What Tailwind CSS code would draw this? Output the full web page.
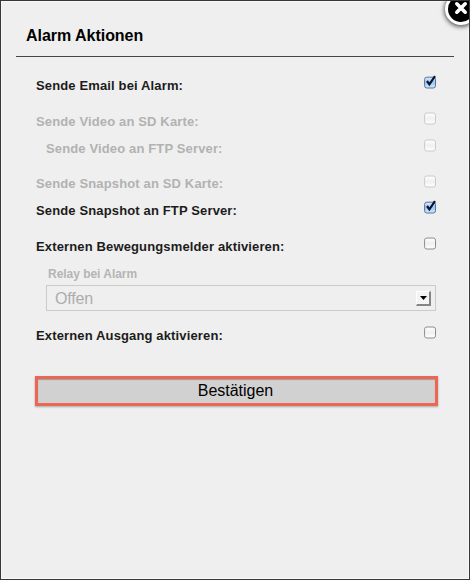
<!DOCTYPE html>
<html lang="de">
<head>
<meta charset="utf-8">
<title>Alarm Aktionen</title>
<script src="https://cdn.jsdelivr.net/npm/@tailwindcss/browser@4"></script>
</head>
<body class="font-['Liberation_Sans',Arial,sans-serif]">
<svg class="absolute size-0">
  <defs>
    <linearGradient id="off" x2="0" y2="1"><stop offset="0" stop-color="#fff"/><stop offset=".5" stop-color="#f0f0f0"/><stop offset="1" stop-color="#fff"/></linearGradient>
    <linearGradient id="on" x2="0" y2="1"><stop offset="0" stop-color="#dcecfa"/><stop offset=".5" stop-color="#9cc6ee"/><stop offset="1" stop-color="#d0edff"/></linearGradient>
    <symbol id="box" viewBox="0 0 14 15"><rect x=".6" y="2" width="10.9" height="11" rx="2.2" fill="url(#off)" stroke="currentColor"/></symbol>
    <symbol id="checked" viewBox="0 0 14 15"><rect x=".6" y="2.2" width="10.9" height="10.8" rx="2.2" fill="url(#on)" stroke="#58719a"/><path d="M3 6 5.4 9.4 11 1.2" fill="none" stroke="#0b1433" stroke-width="2.2"/></symbol>
  </defs>
</svg>
<main class="relative h-[580px] w-[470px] overflow-hidden border border-[#3a3637] bg-[#efefef] px-[15px] shadow-[inset_0_0_0_1px_#f8f8f8]">
  <button class="absolute -top-[8px] left-[444px] size-[32px] rounded-full border-[3px] border-white bg-black shadow-[0_1px_4px_1px_#00000099]" aria-label="Schließen">
    <svg class="absolute left-[6px] top-[5px] size-[14px]" viewBox="0 0 14 14"><path d="M2.8 2.8 11.2 11.2M11.2 2.8 2.8 11.2" stroke="#fff" stroke-width="3.6" stroke-linecap="round"/></svg>
  </button>
  <header class="h-[56px] border-b border-[#4a4647] pl-[10px] pt-[26px]">
    <h1 class="text-[16px] leading-[18px] font-bold text-black tracking-[-0.03px]">Alarm Aktionen</h1>
  </header>
  <form class="pl-[20px] pr-[16px] pt-[18px] text-[13px] leading-[15px] font-bold tracking-[0.14px] text-[#1c1c1c]">
    <div class="flex h-[36px] justify-between"><label class="pt-[3px]">Sende Email bei Alarm:</label><svg class="h-[15px] w-[14px]"><use href="#checked"/></svg></div>
    <div class="flex h-[27px] justify-between text-[#b2b2b2]"><label class="pt-[3px]">Sende Video an SD Karte:</label><svg class="h-[15px] w-[14px] text-[#cacaca]"><use href="#box"/></svg></div>
    <div class="flex h-[36px] justify-between pl-[10px] text-[#b2b2b2]"><label class="pt-[3px]">Sende Video an FTP Server:</label><svg class="h-[15px] w-[14px] text-[#cacaca]"><use href="#box"/></svg></div>
    <div class="flex h-[26px] justify-between text-[#b2b2b2]"><label class="pt-[2px]">Sende Snapshot an SD Karte:</label><svg class="h-[15px] w-[14px] text-[#cacaca]"><use href="#box"/></svg></div>
    <div class="flex h-[36px] justify-between"><label class="pt-[3px]">Sende Snapshot an FTP Server:</label><svg class="h-[15px] w-[14px]"><use href="#checked"/></svg></div>
    <div class="flex h-[29px] justify-between"><label class="pt-[3px]">Externen Bewegungsmelder aktivieren:</label><svg class="h-[15px] w-[14px] text-[#8c8c8c]"><use href="#box"/></svg></div>
    <div class="h-[60px] pl-[10px] pr-[2px]">
      <div class="h-[20px] pl-[2px] pt-[2px] text-[12px] leading-[15px] tracking-[-0.03px] text-[#b5b5b5]">Relay bei Alarm</div>
      <div class="flex h-[26px] items-center justify-between border border-[#cbcbcb] pl-[8px] pr-[4px] text-[16px] font-normal tracking-[-0.2px] text-[#adadad]">
        <span>Offen</span>
        <span class="flex size-[15px] items-center justify-center border border-b-2 border-r-2 border-white border-b-[#858585] border-r-[#858585] bg-[#f4f4f4]"><svg class="h-[4px] w-[7px]" viewBox="0 0 7 4"><path d="M0 0H7L3.5 4Z"/></svg></span>
      </div>
    </div>
    <div class="flex h-[51px] justify-between"><label class="pt-[3px]">Externen Ausgang aktivieren:</label><svg class="h-[15px] w-[14px] text-[#8c8c8c]"><use href="#box"/></svg></div>
    <button type="button" class="-ml-px block h-[30px] w-[403px] border-[3px] border-[#ec6656] bg-[#d1d1d1] pr-[2px] text-[16px] leading-[24px] font-normal tracking-[-0.03px] text-black shadow-[0_1px_2px_#0000004d,inset_0_1px_1px_#00000040]">Bestätigen</button>
  </form>
</main>
</body>
</html>
